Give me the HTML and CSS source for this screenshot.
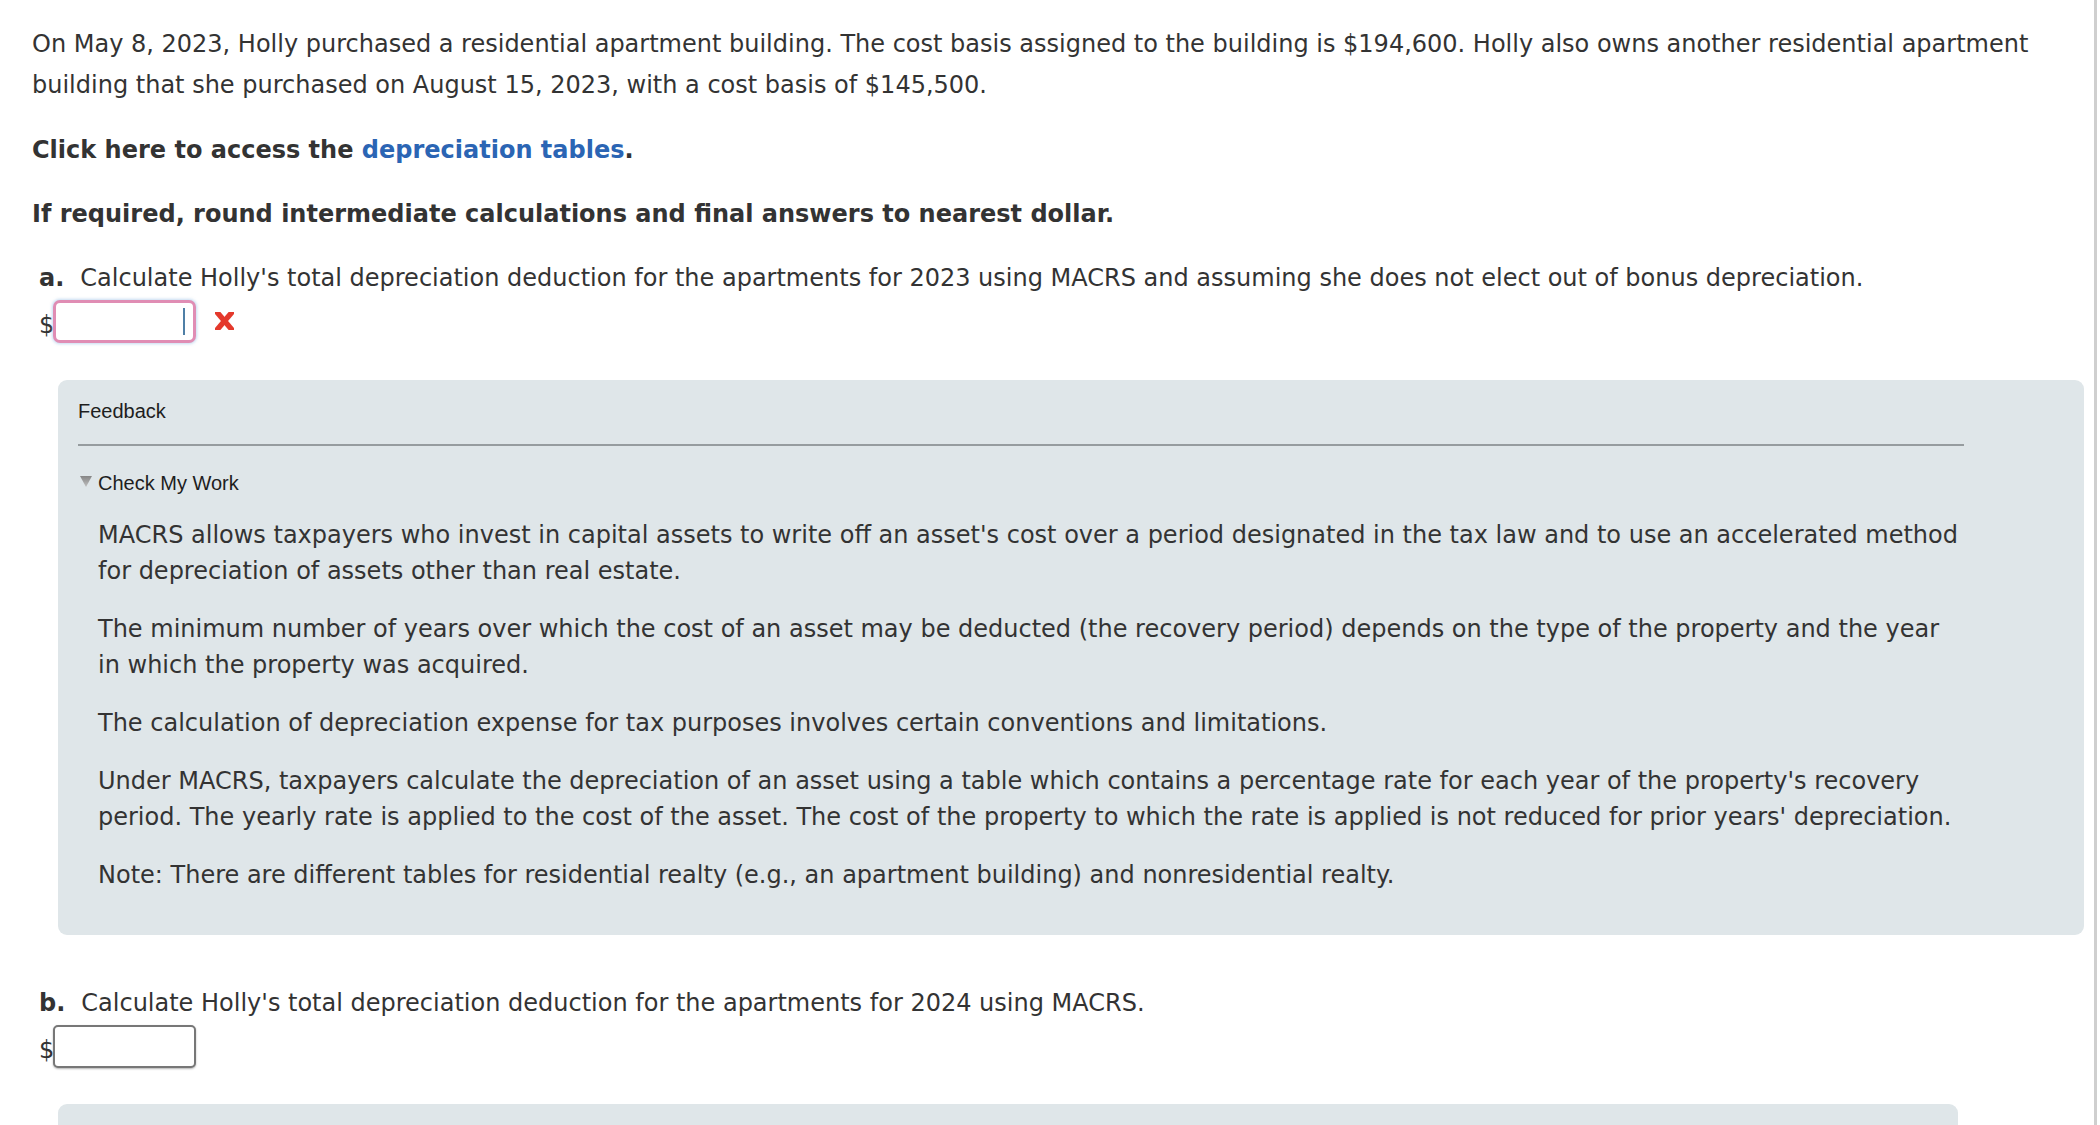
FILE: index.html
```html
<!DOCTYPE html>
<html lang="en">
<head>
<meta charset="utf-8">
<title>Depreciation question</title>
<link rel="stylesheet" href="styles.css">
</head>
<body>
<div class="frame">
  <main class="content">
    <p class="intro intro-lead">On May 8, 2023, Holly purchased a residential apartment building. The cost basis assigned to the building is $194,600. Holly also owns another residential apartment building that she purchased on August 15, 2023, with a cost basis of $145,500.</p>
    <p class="intro strong">Click here to access the <a class="link" href="#">depreciation tables</a>.</p>
    <p class="intro strong">If required, round intermediate calculations and final answers to nearest dollar.</p>

    <section class="question">
      <div class="q-text"><span class="q-label">a.</span>Calculate Holly's total depreciation deduction for the apartments for 2023 using MACRS and assuming she does not elect out of bonus depreciation.</div>
      <div class="answer-row">
        <span class="dollar">$</span>
        <div class="field field-focus"><span class="caret"></span></div>
        <svg class="wrong" width="19" height="18" viewBox="0 0 19 18" aria-hidden="true">
          <line x1="1" y1="-1" x2="18" y2="19" stroke="#e4392c" stroke-width="5.4"/>
          <line x1="18" y1="-1" x2="1" y2="19" stroke="#e4392c" stroke-width="5.4"/>
        </svg>
      </div>
      <div class="feedback">
        <div class="fb-title">Feedback</div>
        <div class="fb-rule"></div>
        <div class="fb-toggle">
          <svg class="tri" width="12" height="11" viewBox="0 0 12 11" aria-hidden="true">
            <defs>
              <linearGradient id="tg" x1="0" y1="0" x2="0" y2="1">
                <stop offset="0" stop-color="#868686"/>
                <stop offset="1" stop-color="#c0c0c0"/>
              </linearGradient>
            </defs>
            <polygon points="0,0 12,0 6,11" fill="url(#tg)"/>
          </svg>
          <span>Check My Work</span>
        </div>
        <div class="fb-body">
          <p>MACRS allows taxpayers who invest in capital assets to write off an asset's cost over a period designated in the tax law and to use an accelerated method for depreciation of assets other than real estate.</p>
          <p>The minimum number of years over which the cost of an asset may be deducted (the recovery period) depends on the type of the property and the year in which the property was acquired.</p>
          <p>The calculation of depreciation expense for tax purposes involves certain conventions and limitations.</p>
          <p>Under MACRS, taxpayers calculate the depreciation of an asset using a table which contains a percentage rate for each year of the property's recovery period. The yearly rate is applied to the cost of the asset. The cost of the property to which the rate is applied is not reduced for prior years' depreciation.</p>
          <p>Note: There are different tables for residential realty (e.g., an apartment building) and nonresidential realty.</p>
        </div>
      </div>
    </section>

    <section class="question question-next">
      <div class="q-text"><span class="q-label">b.</span>Calculate Holly's total depreciation deduction for the apartments for 2024 using MACRS.</div>
      <div class="answer-row">
        <span class="dollar">$</span>
        <div class="field"></div>
      </div>
      <div class="feedback feedback-short"></div>
    </section>
  </main>
</div>
</body>
</html>
```

FILE: styles.css
```css
html, body {
  margin: 0;
  padding: 0;
  background: #ffffff;
}

body {
  font-family: "DejaVu Sans", Verdana, sans-serif;
  color: #333333;
  font-size: 24px;
  overflow: hidden;
}

.frame {
  width: 2094px;
  height: 1125px;
  border-right: 3px solid #cfcfcf;
  overflow: hidden;
}

.content {
  padding: 24px 10px 0 32px;
}

.intro {
  margin: 0 0 23px;
  line-height: 41px;
}

.intro-lead {
  margin-bottom: 24px;
}

.strong {
  font-weight: bold;
}

.link {
  color: #2b65b4;
  text-decoration: none;
}

.question {
  padding-left: 7px;
}

.question-next {
  margin-top: 48px;
}

.q-text {
  line-height: 41px;
}

.q-label {
  font-weight: bold;
  margin-right: 16px;
}

.answer-row {
  display: flex;
  align-items: center;
  margin-top: 1px;
  height: 43px;
}

.dollar {
  line-height: 1;
  padding-top: 6px;
  width: 14px;
}

.field {
  box-sizing: border-box;
  width: 143px;
  height: 43px;
  border: 2px solid #777777;
  border-radius: 5px;
  background: #ffffff;
  box-shadow: 0 1px 2px rgba(0, 0, 0, 0.3);
}

.field-focus {
  border: 3px solid #e08db4;
  border-radius: 7px;
  box-shadow: 0 0 3px 1px rgba(150, 190, 230, 0.55);
  display: flex;
  align-items: center;
  justify-content: flex-end;
  padding-right: 8px;
}

.caret {
  width: 2px;
  height: 27px;
  background: #4f7fa6;
}

.wrong {
  margin-left: 19px;
  margin-top: -2px;
}

.feedback {
  margin: 37px 0 0 19px;
  background: #dfe6e9;
  border-radius: 9px;
  padding: 20px 120px 42px 20px;
}

.feedback-short {
  margin-top: 36px;
  margin-right: 126px;
  height: 200px;
  padding: 0;
}

.fb-title {
  font-family: "Liberation Sans", Arial, sans-serif;
  font-size: 20px;
  line-height: 23px;
  color: #1e1e1e;
}

.fb-rule {
  height: 2px;
  background: #969c9f;
  margin-top: 21px;
}

.fb-toggle {
  margin-top: 26px;
  display: flex;
  align-items: center;
  font-family: "Liberation Sans", Arial, sans-serif;
  font-size: 20px;
  line-height: 23px;
  color: #1e1e1e;
}

.tri {
  margin: 0 6px 0 2px;
  position: relative;
  top: -2px;
}

.fb-body {
  padding-left: 20px;
}

.fb-body p {
  margin: 22px 0 0;
  line-height: 36px;
}
```
